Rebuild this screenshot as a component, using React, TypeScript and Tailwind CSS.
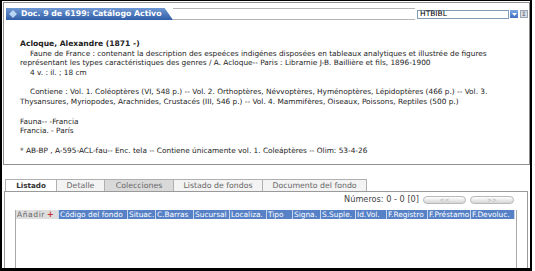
import React from 'react';

const font = { fontFamily: '"DejaVu Sans", Verdana, sans-serif' };

const columns = [
  { label: 'Código del fondo', w: 'w-[69px]' },
  { label: 'Situac.', w: 'w-[28px]' },
  { label: 'C.Barras', w: 'w-[38px]' },
  { label: 'Sucursal', w: 'w-[36px]' },
  { label: 'Localiza.', w: 'w-[37px]' },
  { label: 'Tipo', w: 'w-[26px]' },
  { label: 'Signa.', w: 'w-[28px]' },
  { label: 'S.Suple.', w: 'w-[35px]' },
  { label: 'Id.Vol.', w: 'w-[31px]' },
  { label: 'F.Registro', w: 'w-[41px]' },
  { label: 'F.Préstamo', w: 'w-[43px]' },
  { label: 'F.Devoluc.', w: 'w-[44px]' },
];

const tabs = [
  { label: 'Listado', w: 'w-[52px]', cls: 'bg-white font-bold text-[#333] text-[7.2px]' },
  { label: 'Detalle', w: 'w-[48px]', cls: 'bg-[#f3f3f3] text-[#666] text-[7.8px]' },
  { label: 'Colecciones', w: 'w-[69px]', cls: 'bg-[#d9d9d9] text-[#666] text-[7.8px]' },
  { label: 'Listado de fondos', w: 'w-[89px]', cls: 'bg-[#f3f3f3] text-[#666] text-[7.8px]' },
  { label: 'Documento del fondo', w: 'w-[104px]', cls: 'bg-[#f3f3f3] text-[#666] text-[7.8px]' },
];

const lines: { text: string; indent?: boolean; bold?: boolean }[] = [
  { text: 'Acloque, Alexandre (1871 -)', bold: true },
  { text: 'Faune de France : contenant la description des espeéces indigénes disposées en tableaux analytiques et illustrée de figures', indent: true },
  { text: 'représentant les types caractéristiques des genres / A. Acloque-- Paris : Librarnie J-B. Baillière et fils, 1896-1900' },
  { text: '4 v. : il. ; 18 cm', indent: true },
  { text: '' },
  { text: 'Contiene : Vol. 1. Coléoptères (VI, 548 p.) -- Vol. 2. Orthoptères, Névvoptères, Hyménoptères, Lépidoptères (466 p.) -- Vol. 3.', indent: true },
  { text: 'Thysansures, Myriopodes, Arachnides, Crustacés (III, 546 p.) -- Vol. 4. Mammifères, Oiseaux, Poissons, Reptiles (500 p.)' },
  { text: '' },
  { text: 'Fauna-- -Francia' },
  { text: 'Francia. - París' },
  { text: '' },
  { text: '* AB-BP , A-595-ACL-fau-- Enc. tela -- Contiene únicamente vol. 1. Coleáptères -- Olim: 53-4-26' },
];

const PillButton = ({ label, w }: { label: string; w: string }) => (
  <div
    className={`${w} h-[8px] rounded-full border border-[#b9b9b9] bg-gradient-to-b from-white to-[#d6d6d6] flex items-center justify-center text-[6px] leading-none text-[#aaa]`}
  >
    {label}
  </div>
);

export default function App() {
  return (
    <div className="w-[535px] h-[271px] bg-white" style={font}>
      <div className="w-[532px] h-[271px] border-l-2 border-t border-r-2 border-b-[3px] border-black flex flex-col">
        {/* upper panel */}
        <div className="ml-[1px] mt-[1px] w-[527px] h-[163px] border border-[#8f8f8f] pt-[5px] flex flex-col">
          <div className="flex items-center h-[12px] pl-[2px]">
            <div className="relative w-[167px] h-[12px] bg-gradient-to-b from-[#6f97d2] to-[#2f5ea8] [clip-path:polygon(0_0,95%_0,100%_100%,0_100%)] flex items-center">
              <svg width="8" height="8" viewBox="0 0 8 8" className="ml-[3px]">
                <polygon points="4,0.5 7.5,4 4,7.5 0.5,4" fill="#b8d4f4" stroke="#e6f0fb" strokeWidth="0.6" />
              </svg>
              <span className="ml-[4px] text-[7.8px] font-bold text-white leading-none whitespace-nowrap">
                Doc. 9 de 6199: Catálogo Activo
              </span>
            </div>
            <div className="w-[242px] h-[12px] border-y border-[#b5b5b5] bg-white" />
            <div className="ml-[2px] w-[92px] h-[9px] border border-[#7f9db9] bg-white flex items-center pl-[2px] text-[7.5px] leading-none text-black">
              HTBIBL
            </div>
            <div className="ml-[1px] w-[8px] h-[8px] bg-gradient-to-b from-[#7ea7e6] to-[#3f6fc0] flex items-center justify-center">
              <svg width="5" height="3" viewBox="0 0 5 3">
                <polygon points="0,0 5,0 2.5,3" fill="white" />
              </svg>
            </div>
            <div className="ml-[2px] w-[8px] h-[8px] border border-[#9aa6b4] bg-[#d7dde4] flex items-center justify-center text-[6px] leading-none text-[#556]">
              Σ
            </div>
          </div>
          <div className="pl-[16px] pt-[19px] text-[7.35px] text-[#222] leading-[9.7px]">
            {lines.map((l, i) => (
              <div key={i} className={`h-[9.7px] whitespace-nowrap ${l.indent ? 'pl-[10px]' : ''} ${l.bold ? 'font-bold text-[7.6px]' : ''}`}>
                {l.text}
              </div>
            ))}
          </div>
        </div>

        {/* lower panel */}
        <div className="mt-[14px] ml-[2px] flex pl-[1px] h-[12px]">
          {tabs.map((t) => (
            <div
              key={t.label}
              className={`${t.w} h-[12px] border-t border-r border-[#b0b0b0] first:border-l flex items-center justify-center leading-none whitespace-nowrap ${t.cls}`}
            >
              {t.label}
            </div>
          ))}
        </div>
        <div className="ml-[2px] w-[524px] flex-1 border-t border-l border-r border-[#9a9a9a] flex flex-col">
          <div className="h-[11px] mt-[2px] flex items-center justify-end pr-[13px]">
            <span className="text-[8.2px] leading-none text-[#444] mr-[4px]">Números: 0 - 0 [0]</span>
            <PillButton label="<<" w="w-[43px]" />
            <div className="w-[4px]" />
            <PillButton label=">>" w="w-[44px]" />
          </div>
          <div className="mt-[5px] ml-[10px] w-[502px] flex-1 border-l border-r border-[#a8a8a8] flex flex-col">
            <div className="flex h-[9px]">
              <div className="w-[43px] h-[9px] bg-[#dedede] flex items-center pl-[1px] text-[7.5px] tracking-[0.6px] leading-none text-[#666] border-r border-[#c9d5ea]">
                Añadir <span className="ml-[2px] text-[#c8302a] font-bold text-[8px]">+</span>
              </div>
              {columns.map((c) => (
                <div
                  key={c.label}
                  className={`${c.w} h-[9px] bg-[#5681c6] border-r border-[#c9d5ea] flex items-center pl-[1px] overflow-hidden text-[7.4px] leading-none text-white whitespace-nowrap`}
                >
                  {c.label}
                </div>
              ))}
            </div>
          </div>
        </div>
      </div>
    </div>
  );
}
